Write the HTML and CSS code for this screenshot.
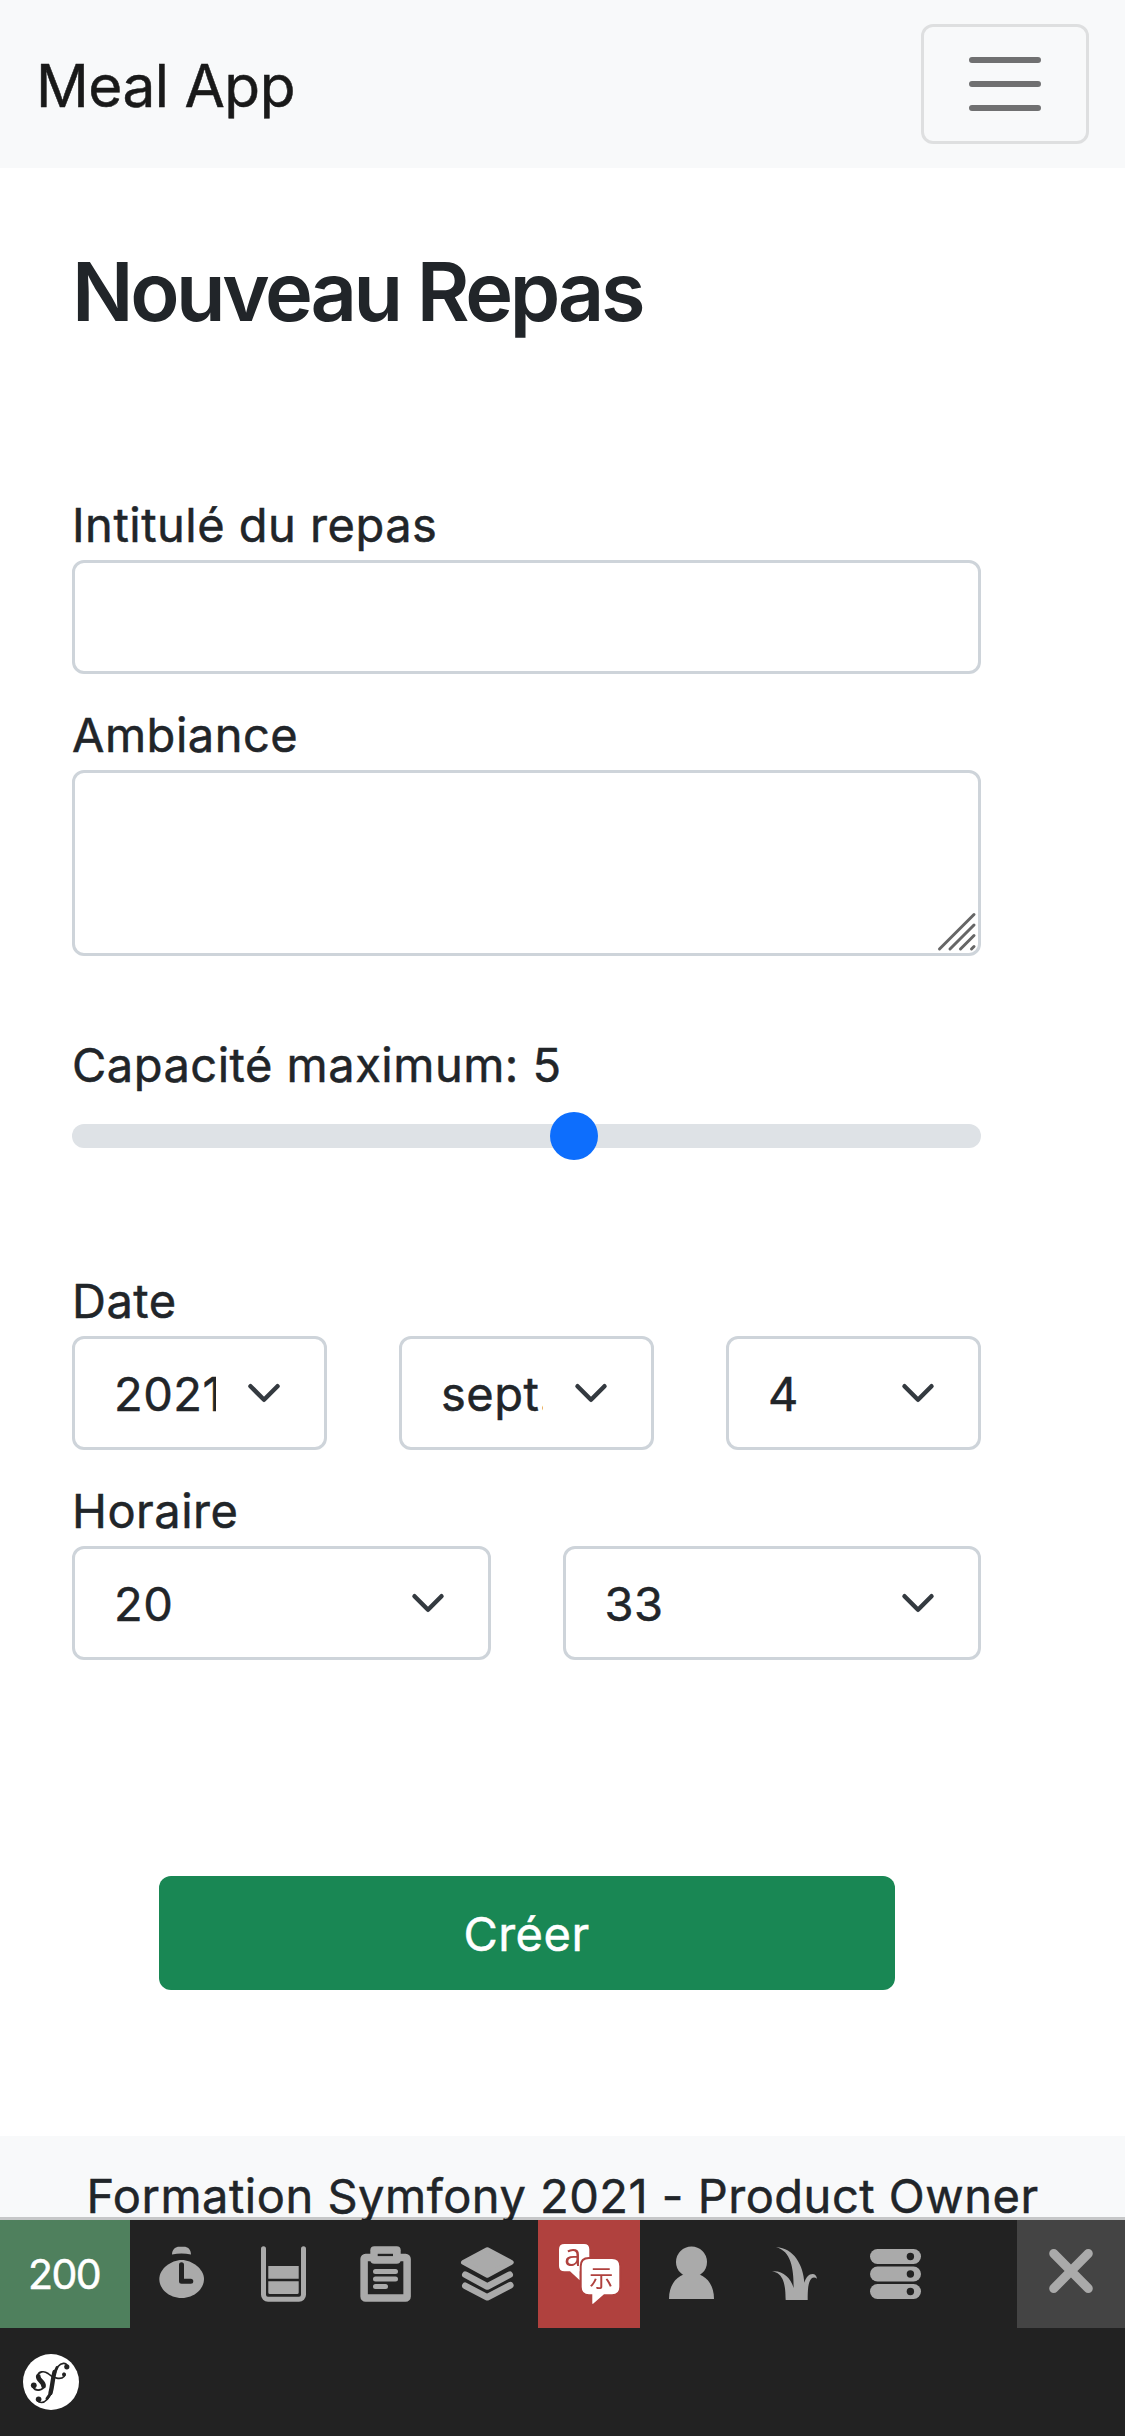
FILE: index.html
```html
<!DOCTYPE html>
<html lang="fr">
<head>
<meta charset="utf-8">
<title>Meal App</title>
<link rel="stylesheet" href="styles.css">
</head>
<body>
<nav class="navbar">
  <a class="brand">Meal App</a>
  <button class="toggler" type="button" aria-label="Menu">
    <svg width="90" height="90" viewBox="0 0 30 30"><path d="M4 7h22M4 15h22M4 23h22" stroke="rgba(0,0,0,.55)" stroke-width="2" stroke-linecap="round"/></svg>
  </button>
</nav>

<main class="content">
  <h1 class="title">Nouveau Repas</h1>
  <form class="form">
    <div class="field">
      <label class="label" for="name">Intitulé du repas</label>
      <input class="control" id="name" type="text">
    </div>
    <div class="field">
      <label class="label" for="mood">Ambiance</label>
      <div class="area-wrap">
        <textarea class="control area" id="mood"></textarea>
        <svg class="grip" width="40" height="40" viewBox="0 0 40 40"><path d="M2.500 37L37 2.500M13 37L37 13M23.500 37L37 23.500M34.500 37L37 34.500" stroke="#666" stroke-width="3" stroke-linecap="round"/></svg>
      </div>
    </div>
    <div class="field field-capacity">
      <label class="label" for="capacity">Capacité maximum: 5</label>
      <input class="range" id="capacity" type="range" min="0" max="9" value="5">
    </div>
    <div class="field field-date">
      <div class="label">Date</div>
      <div class="row">
        <select class="control select" aria-label="Année"><option>2021</option></select>
        <select class="control select" aria-label="Mois"><option>sept.</option></select>
        <select class="control select" aria-label="Jour"><option>4</option></select>
      </div>
    </div>
    <div class="field">
      <div class="label">Horaire</div>
      <div class="row">
        <select class="control select" aria-label="Heure"><option>20</option></select>
        <select class="control select" aria-label="Minute"><option>33</option></select>
      </div>
    </div>
    <button class="submit" type="button">Créer</button>
  </form>
</main>

<footer class="footer">Formation Symfony 2021 - Product Owner</footer>

<div class="toolbar">
  <div class="toolbar-row">
    <div class="status">200</div>
    <svg class="cell" viewBox="0 0 102 108">
      <path fill="#aaa" d="M42 34.600C42 29 46 26.700 49 26.700H54C57.500 26.700 61 29 61 34.600Q51.500 32.400 42 34.600Z"/>
      <path fill="#aaa" d="M51.700 40C62 40 74 49 74 59C74 69 64 78 51.700 78C39 78 29.300 69 29.300 59C29.300 49 41 40 51.700 40Z"/>
      <path fill="none" stroke="#222" stroke-width="5" stroke-linecap="round" stroke-linejoin="round" d="M51.500 44.800V61.200H60.800"/>
    </svg>
    <svg class="cell" viewBox="0 0 102 108">
      <path fill="none" stroke="#aaa" stroke-width="5" stroke-linecap="round" d="M31.500 28.800V74.700a4.500 4.500 0 0 0 4.500 4.500H67a4.500 4.500 0 0 0 4.500-4.500V28.800"/>
      <path fill="#aaa" d="M36.300 46H66.700V58.700H36.300ZM36.300 61.300H66.700V72.500q0 1.500-1.500 1.500H37.800q-1.500 0-1.500-1.500Z"/>
    </svg>
    <svg class="cell" viewBox="0 0 102 108">
      <rect x="30.100" y="37.400" width="43" height="40.700" rx="1.500" fill="none" stroke="#aaa" stroke-width="7.500"/>
      <rect x="36.300" y="26.300" width="30.400" height="17.400" rx="4" fill="#aaa"/>
      <rect x="43.700" y="33.800" width="15.300" height="2.300" fill="#222"/>
      <path stroke="#aaa" stroke-width="5" stroke-linecap="round" d="M41.500 51.500H61.500M41.500 59H61.500M41.500 66.400H51.500"/>
    </svg>
    <svg class="cell" viewBox="0 0 102 108">
      <path fill="#aaa" stroke="#aaa" stroke-width="5" stroke-linejoin="round" d="M51.300 29.700L75.200 42.400L51.300 55.200L27.500 42.400Z"/>
      <path fill="none" stroke="#aaa" stroke-width="6.600" stroke-linecap="round" stroke-linejoin="round" d="M29.300 54.700L51.300 66.500L73.700 54.700M29.300 65.800L51.300 77.300L74.300 65.300"/>
    </svg>
    <svg class="cell cell-alert" viewBox="0 0 102 108">
      <path fill="#fff" d="M26.500 24H46q5.300 0 5.300 5.300V51.300H41.700V60.300L32 51.300H26.500Q21 51.300 21 46V29.300Q21 24 26.500 24Z"/>
      <text class="glyph-a" x="26.200" y="45.700" fill="#b0413e">a</text>
      <path fill="#fff" stroke="#b0413e" stroke-width="4" paint-order="stroke" d="M51 39H74q7.300 0 7.300 7.300V67q0 7.300-7.300 7.300H66L54.800 84Q54.300 84 54.300 83V74.300H51q-7.300 0-7.300-7.300V46.300Q43.700 39 51 39Z"/>
      <text class="glyph-cjk" x="51.200" y="66.500" fill="#b0413e">示</text>
    </svg>
    <svg class="cell" viewBox="0 0 102 108">
      <circle cx="51.500" cy="41.900" r="15.500" fill="#aaa"/>
      <path fill="#aaa" d="M29 79C29 66 35 58 43.500 54.500H59.500C68 58 74 66 74 79Z"/>
    </svg>
    <svg class="cell" viewBox="0 0 102 108">
      <path fill="#aaa" d="M34 27.300C52 27.500 61.500 46 62.300 62.700C64 57 67 54 70.500 54C73 54 74.500 56 75 58.700C73 57 71 57 69.500 58.500C66 62 65.700 70 65.700 80H43.700C43.700 66 42 53 30 51.300C40 50 48.500 57 51.700 68C51.700 48 49 31 34 27.300Z"/>
    </svg>
    <svg class="cell" viewBox="0 0 102 108">
      <g fill="#aaa"><rect x="26" y="29" width="51" height="15" rx="7.500"/><rect x="26" y="46.500" width="51" height="15" rx="7.500"/><rect x="26" y="64" width="51" height="15" rx="7.500"/></g>
      <g fill="#222"><circle cx="66.400" cy="36.500" r="3.700"/><circle cx="66.400" cy="54" r="3.700"/><circle cx="66.400" cy="71.500" r="3.700"/></g>
    </svg>
    <svg class="cell cell-close" viewBox="0 0 108 108">
      <path stroke="#aaa" stroke-width="9" stroke-linecap="round" d="M36.700 33.500L71.300 68.500M71.300 33.500L36.700 68.500"/>
    </svg>
  </div>
  <div class="toolbar-row toolbar-brand">
    <svg width="56" height="56" viewBox="0 0 56 56">
      <circle cx="28" cy="28" r="28" fill="#fff"/>
      <g fill="none" stroke="#222" stroke-linecap="round">
        <path stroke-width="1.800" d="M10 33Q12 36.500 16 36Q20.500 35.500 21 31.500"/>
        <path stroke-width="4.800" d="M20.500 32C20.800 27.500 15 26.500 15.300 22.500"/>
        <path stroke-width="1.700" d="M14.500 22C15.500 17.500 21 16.500 25 19.500C30 24.500 38 26 41 22.500Q42.500 20.500 41 19.500"/>
        <path stroke-width="1.700" d="M44 11.500C43 8.500 38.500 8.500 35 12.500C32.500 15.500 31.500 19 31 22M29 37C26.500 43 23.500 48.500 18.500 48.500Q15.500 48.500 14.500 46.500"/>
        <path stroke-width="4.400" d="M31.500 18C29.500 25 29.500 32 27.500 39"/>
        <path stroke-width="3" d="M34 13.500L31.500 19M27.500 39.500L24 44.500"/>
      </g>
      <g fill="#222"><circle cx="10.800" cy="31.300" r="2.900"/><circle cx="43.800" cy="12.800" r="2.600"/><circle cx="41" cy="20.500" r="2"/><circle cx="15.600" cy="45.300" r="2.800"/></g>
    </svg>
  </div>
</div>
</body>
</html>
```
FILE: styles.css
```css
* { box-sizing: border-box; }

html, body { height: 2436px; overflow: hidden; }

body {
  margin: 0;
  background: #fff;
  color: #212529;
  font-family: Inter, "Liberation Sans", sans-serif;
  font-size: 47px;
  font-weight: 400;
  letter-spacing: .5px;
  line-height: 72px;
  -webkit-text-stroke: .5px currentColor;
}

.navbar {
  display: flex;
  align-items: center;
  justify-content: space-between;
  height: 168px;
  padding: 0 36px;
  background: #f8f9fa;
}

.brand {
  padding-top: 3px;
  color: rgb(25, 25, 25);
  font-size: 58.5px;
  letter-spacing: -.5px;
}

.toggler {
  display: flex;
  align-items: center;
  justify-content: center;
  width: 168px;
  height: 120px;
  padding: 0;
  border: 3px solid rgba(0, 0, 0, .1);
  border-radius: 12px;
  background: transparent;
}

.content {
  width: 909px;
  height: 1968px;
  margin-left: 72px;
  padding-top: 75px;
}

.title {
  margin: 0;
  font-size: 81px;
  font-weight: 600;
  letter-spacing: -3.35px;
  line-height: 99.5px;
  -webkit-text-stroke: 0;
}

.form { padding-top: 145px; }
.field { margin-bottom: 24px; }
.field-capacity { padding-top: 48px; }
.field-date { padding-top: 68px; }

.label {
  display: block;
  height: 72px;
  padding-top: 2px;
  line-height: 69px;
}

.control {
  display: block;
  width: 100%;
  height: 114px;
  padding: 18px 36px;
  border: 3px solid #ced4da;
  border-radius: 12px;
  outline: 0;
  background-color: #fff;
  color: #212529;
  font: inherit;
  letter-spacing: inherit;
  appearance: none;
}

.area-wrap { position: relative; }
.area { height: 186px; resize: none; }
.grip { position: absolute; right: 4px; bottom: 4px; }

.range {
  display: block;
  width: 100%;
  height: 72px;
  margin: 0;
  background: transparent;
  appearance: none;
}

.range::-webkit-slider-runnable-track {
  height: 24px;
  border-radius: 12px;
  background: #dee2e6;
}

.range::-webkit-slider-thumb {
  width: 48px;
  height: 48px;
  margin-top: -12px;
  border-radius: 50%;
  background: #0d6efd;
  appearance: none;
}

.row { display: flex; gap: 72px; }

.select {
  flex: 1 1 0;
  min-width: 0;
  padding: 19px 108px 17px 39px;
  background-image: url("data:image/svg+xml,%3Csvg xmlns='http://www.w3.org/2000/svg' viewBox='0 0 16 16'%3E%3Cpath fill='none' stroke='%23343a40' stroke-linecap='round' stroke-linejoin='round' stroke-width='2' d='M2 5l6 6 6-6'/%3E%3C/svg%3E");
  background-repeat: no-repeat;
  background-position: right 36px center;
  background-size: 48px 36px;
}

.submit {
  display: block;
  width: 736px;
  height: 114px;
  margin: 216px auto 0;
  padding: 3px 0 0;
  border: 0;
  border-radius: 12px;
  background: #198754;
  color: #fff;
  font: inherit;
  letter-spacing: inherit;
}

.footer {
  height: 300px;
  padding-top: 24px;
  background: #f8f9fa;
  text-align: center;
}

.toolbar {
  position: fixed;
  right: 0;
  bottom: 0;
  left: 0;
  height: 216px;
  background: #222;
  box-shadow: 0 -3px 0 rgba(0, 0, 0, .2);
}

.toolbar-row { display: flex; height: 108px; }

.status {
  width: 130px;
  padding-right: 2px;
  background: #4f805d;
  color: #fff;
  font-size: 41px;
  letter-spacing: -1.5px;
  line-height: 109px;
  text-align: center;
}

.cell { width: 102px; height: 108px; }
.cell-alert { background: #b0413e; }
.cell-close { width: 108px; margin-left: auto; background: #444; }
.glyph-a { font: 31px "Open Sans", sans-serif; }
.glyph-cjk { font: 24px "Noto Sans CJK JP", sans-serif; }

.toolbar-brand { align-items: center; padding-left: 23px; }
```
